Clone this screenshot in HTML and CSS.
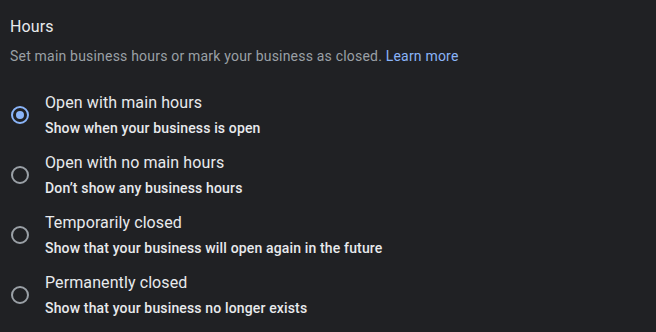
FILE: index.html
```html
<!DOCTYPE html>
<html>
<head>
<meta charset="utf-8">
<link rel="stylesheet" href="styles.css">
</head>
<body>
<section class="hours">
  <h2 class="title">Hours</h2>
  <p class="desc">Set main business hours or mark your business as closed. <a class="link" href="#">Learn more</a></p>
  <div class="options">
    <label class="option">
      <span class="radio checked"><span class="dot"></span></span>
      <span class="text">
        <span class="opt-title">Open with main hours</span>
        <span class="opt-sub">Show when your business is open</span>
      </span>
    </label>
    <label class="option">
      <span class="radio"></span>
      <span class="text">
        <span class="opt-title">Open with no main hours</span>
        <span class="opt-sub">Don’t show any business hours</span>
      </span>
    </label>
    <label class="option">
      <span class="radio"></span>
      <span class="text">
        <span class="opt-title">Temporarily closed</span>
        <span class="opt-sub">Show that your business will open again in the future</span>
      </span>
    </label>
    <label class="option">
      <span class="radio"></span>
      <span class="text">
        <span class="opt-title">Permanently closed</span>
        <span class="opt-sub">Show that your business no longer exists</span>
      </span>
    </label>
  </div>
</section>
</body>
</html>
```
FILE: styles.css
```css
html, body {
  margin: 0;
  padding: 0;
  background: #202124;
}
body {
  font-family: Roboto, "Noto Sans", sans-serif;
  color: #e8eaed;
}
.hours {
  padding: 15px 10px 0 10px;
}
.title {
  margin: 0;
  font-size: 16px;
  line-height: 24px;
  font-weight: 400;
  letter-spacing: 0.1px;
  color: #e8eaed;
}
.desc {
  margin: 7px 0 0 0;
  font-size: 14px;
  line-height: 20px;
  letter-spacing: 0.2px;
  color: #9aa0a6;
}
.link {
  color: #8ab4f8;
  text-decoration: none;
}
.options {
  margin-top: 25px;
  display: flex;
  flex-direction: column;
  gap: 13px;
}
.option {
  display: flex;
  align-items: center;
  gap: 16px;
}
.radio {
  box-sizing: border-box;
  width: 18px;
  height: 18px;
  margin-left: 1px;
  border: 2px solid #9aa0a6;
  border-radius: 50%;
  display: flex;
  align-items: center;
  justify-content: center;
  flex: none;
}
.radio.checked {
  border-color: #8ab4f8;
}
.dot {
  width: 8px;
  height: 8px;
  border-radius: 50%;
  background: #8ab4f8;
}
.text {
  display: flex;
  flex-direction: column;
  gap: 3px;
}
.opt-title {
  font-size: 16px;
  line-height: 24px;
  letter-spacing: 0.1px;
  color: #e8eaed;
}
.opt-sub {
  font-size: 14px;
  line-height: 20px;
  font-weight: 500;
  letter-spacing: 0.15px;
  color: #e8eaed;
}
```
